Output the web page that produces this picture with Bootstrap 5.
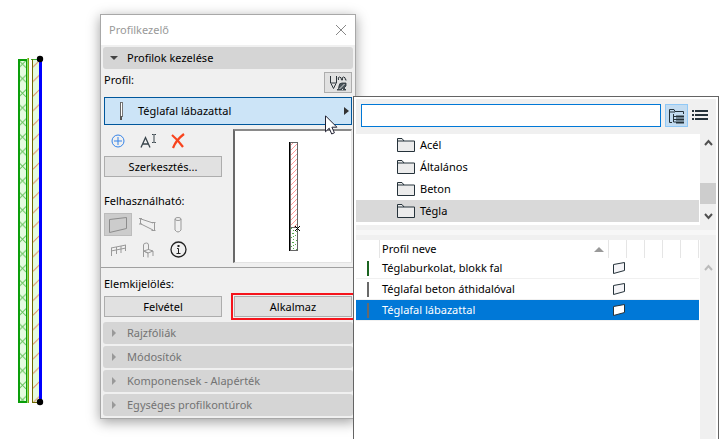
<!DOCTYPE html>
<html lang="hu">
<head>
<meta charset="utf-8">
<meta name="viewport" content="width=device-width, initial-scale=1">
<title>Profilkezelő</title>
<link href="https://cdn.jsdelivr.net/npm/bootstrap@5.3.0/dist/css/bootstrap.min.css" rel="stylesheet">
<style>
body{font-family:"Noto Sans","Open Sans",sans-serif;font-size:11px;line-height:16px;color:#000;background:#fff}
svg{display:block;flex:none}
button{font:inherit;color:inherit;padding:0}
.desktop{min-height:100vh;overflow:hidden}
.wall{left:16px;top:55px}
.win{left:100px;top:14px;width:256px;background:#f0f0f0;border:1px solid #a8a8a8;box-shadow:0 3px 12px rgba(0,0,0,.38);padding-bottom:2px}
.titlebar{height:30px;padding:0 8px;color:#999}
.sect{height:22px;background:#d5d5d5;border:0;border-radius:3px;padding:0 7px;gap:8px;color:#737373}
.sect.open{color:#000}
.stack{padding:2px 2px 0;gap:2px}
.stack.closed{padding-top:5px}
.pane{padding:0 3px}
.tool{height:21px;border:1px solid #adadad;background:#e1e1e1;border-radius:0}
.sq{width:28px}
.row-top{margin-top:3px}
.picker{height:28px;border:1px solid #00579c;background:#cce4f7;padding:0 2px 0 14px;gap:14px}
.left{width:118px}
.preview{width:119px;height:134px;background:#fff;border:1px solid #a0a0a0;border-top:2px solid #8a8a8a;border-left:2px solid #696969;border-right-color:#e3e3e3;border-bottom-color:#e3e3e3}
.ico{width:28px;height:23px;border:1px solid transparent;background:transparent}
.ico.on{background:#ccc;border-color:#bcbcbc}
.kinds{gap:2px}
.kinds.next{margin-top:2px}
.rule{border-top:1px solid #a0a0a0}
.apply{position:relative}
.apply::after{content:"";position:absolute;inset:-4px;border:2px solid #f5141c;pointer-events:none}
.pop{left:353px;right:6px;top:96px;bottom:-4px;border:1px solid #646464;background:#fff;padding:2px}
.popin{background:#f0f0f0;min-width:0}
.search{padding:5px 5px 7px 5px}
.search input{height:23px;border:1px solid #0078d7;outline:0;background:#fff;padding:0 4px;min-width:0}
.view{width:23px;height:23px;border:1px solid transparent;background:transparent;flex:none}
.view.on{background:#c3dcf1;border-color:#90c8f6}
.tree{height:91px;background:#fff}
.tree li{height:22px;padding-left:41px;gap:5px;margin-right:1px}
.tree li.on{background:#d9d9d9}
.bar{width:16px;flex:none;padding:5px 0}
.thumb{height:21px;background:#cdcdcd}
.split{height:5px;background:#f7f7f7;margin:5px 0}
.grid{table-layout:fixed;width:100%;border-collapse:separate;border-spacing:0}
.grid th{height:18px;font-weight:400;padding:0 0 0 2px;border-right:1px solid #e5e5e5}
.grid td{height:21px;padding:0 0 0 2px;border-bottom:1px solid #f0f0f0}
.grid td:nth-child(1){padding-left:11px}
.grid td:nth-child(3){padding-left:3px}
.grid tr.on td{background:#0078d7;color:#fff}
.c0{width:24px}.c1{width:18px}
.sw{width:2px;height:15px;background:#696969}
.sw.g{background:#1b6420}
.lower{background:#fff;padding-right:1px;min-width:0}
.cursor{left:325px;top:115px}
</style>
<script src="https://cdn.jsdelivr.net/npm/bootstrap@5.3.0/dist/js/bootstrap.bundle.min.js"></script>
</head>
<body>
<main class="desktop position-relative">
<svg class="wall position-absolute" width="30" height="352" viewBox="0 0 30 352" aria-hidden="true">
<defs>
<pattern id="cross" width="9" height="14.6" patternUnits="userSpaceOnUse" x="2" y="2"><path d="M1 3.500l7 7M8 3.500l-7 7" stroke="#6cc462"/></pattern>
<pattern id="slash" width="7" height="14.6" patternUnits="userSpaceOnUse" x="17" y="1"><path d="M0 11l7-7" stroke="#dd9470"/></pattern>
</defs>
<path d="M2 4h10v343H2zM16 4h8v343h-8z" fill="#e4fbe0"/>
<path d="M2 4h10v343H2z" fill="url(#cross)"/><path d="M17 4h6v343h-6z" fill="url(#slash)"/>
<g shape-rendering="crispEdges" fill="none"><path d="M2 4.500h10M2 347h10M2.500 4v343" stroke="#0a9e0a" stroke-width="2"/><path d="M10.500 4v343" stroke="#0a9e0a"/><path d="M11.500 3v345" stroke="#8fd86c"/><path d="M12.500 3v345" stroke="#7aa80e"/><path d="M15 4h8" stroke="#34b234"/><path d="M16.500 4v343h7" stroke="#6d6b00"/><path d="M24.500 4v343" stroke="#00f" stroke-width="3"/></g>
<circle cx="24" cy="4" r="3.200"/><circle cx="24" cy="347" r="3.200"/>
</svg>

<section class="win position-absolute" aria-label="Profilkezelő">
<header class="titlebar bg-white d-flex align-items-center justify-content-between"><span>Profilkezelő</span>
<button class="border-0 bg-transparent" aria-label="Bezárás"><svg width="12" height="12"><path d="M1 1l10 10M11 1L1 11" stroke="#888"/></svg></button></header>
<div class="stack d-flex flex-column">
<button class="sect open d-flex align-items-center"><svg width="9" height="6"><path d="M0 1h8L4 5z" fill="#444"/></svg>Profilok kezelése</button></div>
<div class="pane">
<div class="row-top d-flex justify-content-between align-items-start"><span>Profil:</span>
<button class="tool sq d-flex align-items-center justify-content-center" aria-label="Szűrő"><svg width="18" height="18" fill="none" stroke="#2b3338"><path d="M1.500 2v7h6V2M2 9.500l2.500 5L7 9.500"/><path d="M9.500 6q-1-3 1-3t2 3h1M13.500 6q-1-3 1-3t2 3h1"/><path d="M8 16q2-1 2-4t3-3h4v3l-2 2 2 2z" fill="#4b555b" stroke-width=".8"/><path d="M10.500 15l5-5M14 16l-1-1" stroke="#e1e1e1"/></svg></button></div>
<button class="picker w-100 d-flex align-items-center mt-1"><svg width="5" height="20" shape-rendering="crispEdges"><path d="M1.500 1v17" stroke="#666"/><path d="M1.500 1.500h2v14h-2" fill="#fff" stroke="#777"/><path d="M1 15h2v4H1z" fill="#555"/></svg><span class="flex-grow-1 text-start">Téglafal lábazattal</span><svg width="5" height="8"><path d="M0 0l5 4-5 4z" fill="#333"/></svg></button>
<div class="d-flex justify-content-between mt-1">
<div class="left d-flex flex-column">
<div class="kinds d-flex">
<button class="ico d-flex align-items-center justify-content-center" aria-label="Új"><svg width="14" height="14" fill="none" stroke="#3583e8"><circle cx="7" cy="7" r="6"/><path d="M7 3v8M3 7h8"/></svg></button>
<button class="ico d-flex align-items-center justify-content-center" aria-label="Átnevezés"><svg width="17" height="14" fill="none" stroke="#38444b"><path d="M1 13.500L5.500 3.500l4.500 10M2.500 10h6" stroke-width="1.300"/><path d="M12 .5h1.500l.5.500.5-.5H16M14 1v7M12 8.500h1.500L14 8l.5.500H16"/></svg></button>
<button class="ico d-flex align-items-center justify-content-center" aria-label="Törlés"><svg width="14" height="16"><path d="M1 2q6 5 11 12M13 1Q5 7 2 15" fill="none" stroke="#f8431d" stroke-width="2.200"/></svg></button>
</div>
<button class="tool w-100 mt-1">Szerkesztés...</button>
<div class="mt-3">Felhasználható:</div>
<div class="kinds d-flex mt-1">
<button class="ico on d-flex align-items-center justify-content-center" aria-label="Fal"><svg width="20" height="18" fill="none" stroke="#8c8c8c"><path d="M1.500 3.500l17-2v11l-17 4z"/></svg></button>
<button class="ico d-flex align-items-center justify-content-center" aria-label="Gerenda"><svg width="18" height="16" fill="none" stroke="#999"><path d="M0 1.500h3M1.500 2v5M0 7h3M2 2l12 4M2 7l12 6M12.500 5.500h4M15.500 6v7M12.500 13.500h4"/></svg></button>
<button class="ico d-flex align-items-center justify-content-center" aria-label="Oszlop"><svg width="8" height="18" fill="none" stroke="#999"><ellipse cx="4" cy="3" rx="3" ry="1.500"/><path d="M1 3v11q3 4 6 0V3"/></svg></button></div>
<div class="kinds next d-flex">
<button class="ico d-flex align-items-center justify-content-center" aria-label="Korlát"><svg width="17" height="14" fill="none" stroke="#999"><path d="M1 5l15-3M1 8l15-3M1.500 5v8M6.500 4v7M11 3v7M15.500 2v6"/></svg></button>
<button class="ico d-flex align-items-center justify-content-center" aria-label="Objektum"><svg width="12" height="16" fill="none" stroke="#999"><path d="M1.500 15V3q0-2 3-2 2 0 2 2v5M1.500 9l5-1.500 4.500 1.500-5 2zM6 11v4.500M11 9v5M1.500 9L6 11"/></svg></button>
<button class="ico d-flex align-items-center justify-content-center" aria-label="Információ"><svg width="17" height="17" fill="none" stroke="#222"><circle cx="8.500" cy="8.500" r="7.500" stroke-width="1.300"/><path d="M7 7.500h1.500v5M6.500 12.500h4"/><path d="M7.500 4h2v2h-2z" fill="#222" stroke="none"/></svg></button></div>
</div>
<div class="preview"><svg width="116" height="130" shape-rendering="crispEdges"><defs><pattern id="brick" width="5" height="5" patternUnits="userSpaceOnUse"><path d="M0 4h1V3h1V2h1V1h1V0h1v1H4v1H3v1H2v1H1v1H0z" fill="#ff9a9a"/></pattern><pattern id="conc" width="6" height="9" patternUnits="userSpaceOnUse"><path d="M1 1h1v1H1zM3 3h2v1H3zM0 5h1v1H0zM2 7h1v1H2zM4 6h1v1H4zM4 0h1v1H4z" fill="#55ac4b"/></pattern></defs><path d="M56 11h7v85h-7z" fill="url(#brick)"/><path d="M56 96h7v23h-7z" fill="url(#conc)"/><path d="M55.500 11.500h7v108h-7zM55 96.500h8" fill="none" stroke="#666"/><path d="M54.500 11v109" stroke="#000"/><path d="M60 95l5 5M65 95l-5 5" stroke="#000"/></svg></div>
</div></div>
<div class="rule mt-1"></div>
<div class="pane">
<div class="mt-2">Elemkijelölés:</div>
<div class="d-flex justify-content-between mt-1"><button class="tool left">Felvétel</button><button class="tool left apply">Alkalmaz</button></div></div>
<div class="stack closed d-flex flex-column">
<button class="sect d-flex align-items-center"><svg width="9" height="8"><path d="M2 0l4 4-4 4z" fill="#999"/></svg>Rajzfóliák</button>
<button class="sect d-flex align-items-center"><svg width="9" height="8"><path d="M2 0l4 4-4 4z" fill="#999"/></svg>Módosítók</button>
<button class="sect d-flex align-items-center"><svg width="9" height="8"><path d="M2 0l4 4-4 4z" fill="#999"/></svg>Komponensek - Alapérték</button>
<button class="sect d-flex align-items-center"><svg width="9" height="8"><path d="M2 0l4 4-4 4z" fill="#999"/></svg>Egységes profilkontúrok</button>
</div>
</section>

<section class="pop position-absolute d-flex" aria-label="Profilválasztó">
<div class="popin flex-grow-1 d-flex flex-column">
<div class="search d-flex align-items-center"><input class="flex-grow-1 me-1" type="text" aria-label="Keresés">
<button class="view on d-flex align-items-center justify-content-center" aria-label="Fa nézet"><svg width="17" height="16" fill="none" stroke="#25323a"><path d="M4 14.500H1.500V1.500H6l1 2h8.500V6M1.500 4H7"/><path d="M5.500 6v8H8M5.500 8.500H8M5.500 11.500H8"/><path d="M8 8.500h8M8 11.500h8M8 14.500h8" stroke-width="2"/></svg></button>
<button class="view d-flex align-items-center justify-content-center" aria-label="Lista nézet"><svg width="16" height="11" shape-rendering="crispEdges"><path d="M0 1h2M3 1h13M0 5h2M3 5h13M0 9h2M3 9h13" stroke="#25323a" stroke-width="2"/></svg></button></div>
<div class="d-flex">
<ul class="tree list-unstyled flex-grow-1 m-0">
<li class="d-flex align-items-center"><svg width="18" height="16" viewBox="0 0 18 16" fill="#ececec" stroke="#25323a"><path d="M.5 1.500H5l2 2.500h10.500v10.500H.5zM.5 4H7"/></svg>Acél</li>
<li class="d-flex align-items-center"><svg width="18" height="16" viewBox="0 0 18 16" fill="#ececec" stroke="#25323a"><path d="M.5 1.500H5l2 2.500h10.500v10.500H.5zM.5 4H7"/></svg>Általános</li>
<li class="d-flex align-items-center"><svg width="18" height="16" viewBox="0 0 18 16" fill="#ececec" stroke="#25323a"><path d="M.5 1.500H5l2 2.500h10.500v10.500H.5zM.5 4H7"/></svg>Beton</li>
<li class="on d-flex align-items-center"><svg width="18" height="16" viewBox="0 0 18 16" fill="#ececec" stroke="#25323a"><path d="M.5 1.500H5l2 2.500h10.500v10.500H.5zM.5 4H7"/></svg>Tégla</li>
</ul>
<div class="bar d-flex flex-column"><svg class="mx-auto" width="9" height="8"><path d="M1 6l3.500-4L8 6" fill="none" stroke="#505050" stroke-width="2"/></svg><div class="thumb mt-auto"></div><svg class="mx-auto mt-2" width="9" height="8"><path d="M1 2l3.500 4L8 2" fill="none" stroke="#505050" stroke-width="2"/></svg></div>
</div>
<div class="split"></div>
<div class="d-flex flex-grow-1">
<div class="lower flex-grow-1">
<table class="grid"><colgroup><col class="c0"><col><col class="c1"><col class="c1"><col class="c1"><col class="c1"><col class="c1"></colgroup>
<thead><tr><th></th><th><div class="d-flex justify-content-between align-items-center pe-1"><span>Profil neve</span><svg width="10" height="6"><path d="M0 6l5-5 5 5z" fill="#999"/></svg></div></th><th></th><th></th><th></th><th></th><th></th></tr></thead>
<tbody>
<tr><td><div class="sw g"></div></td><td>Téglaburkolat, blokk fal</td><td colspan="5"><svg width="14" height="14"><path d="M1.500 3.500l11-2v8l-11 3z" fill="#f5f5f8" stroke="#25323a"/></svg></td></tr>
<tr><td><div class="sw"></div></td><td>Téglafal beton áthidalóval</td><td colspan="5"><svg width="14" height="14"><path d="M1.500 3.500l11-2v8l-11 3z" fill="#f5f5f8" stroke="#25323a"/></svg></td></tr>
<tr class="on"><td><div class="sw"></div></td><td>Téglafal lábazattal</td><td colspan="5"><svg width="14" height="14"><path d="M1.500 3.500l11-2v8l-11 3z" fill="#fff" stroke="#25323a"/></svg></td></tr>
</tbody></table></div>
<div class="bar pt-4"><svg class="mx-auto" width="9" height="8"><path d="M1 6l3.500-4L8 6" fill="none" stroke="#bbb" stroke-width="2"/></svg></div>
</div>
</div>
</section>
<svg class="cursor position-absolute" width="13" height="20" aria-hidden="true"><path d="M.5.800v16l3.700-3.600 2.500 5.800 2.700-1.200-2.500-5.600h5z" fill="#fff" stroke="#223"/></svg>
</main>
</body>
</html>
